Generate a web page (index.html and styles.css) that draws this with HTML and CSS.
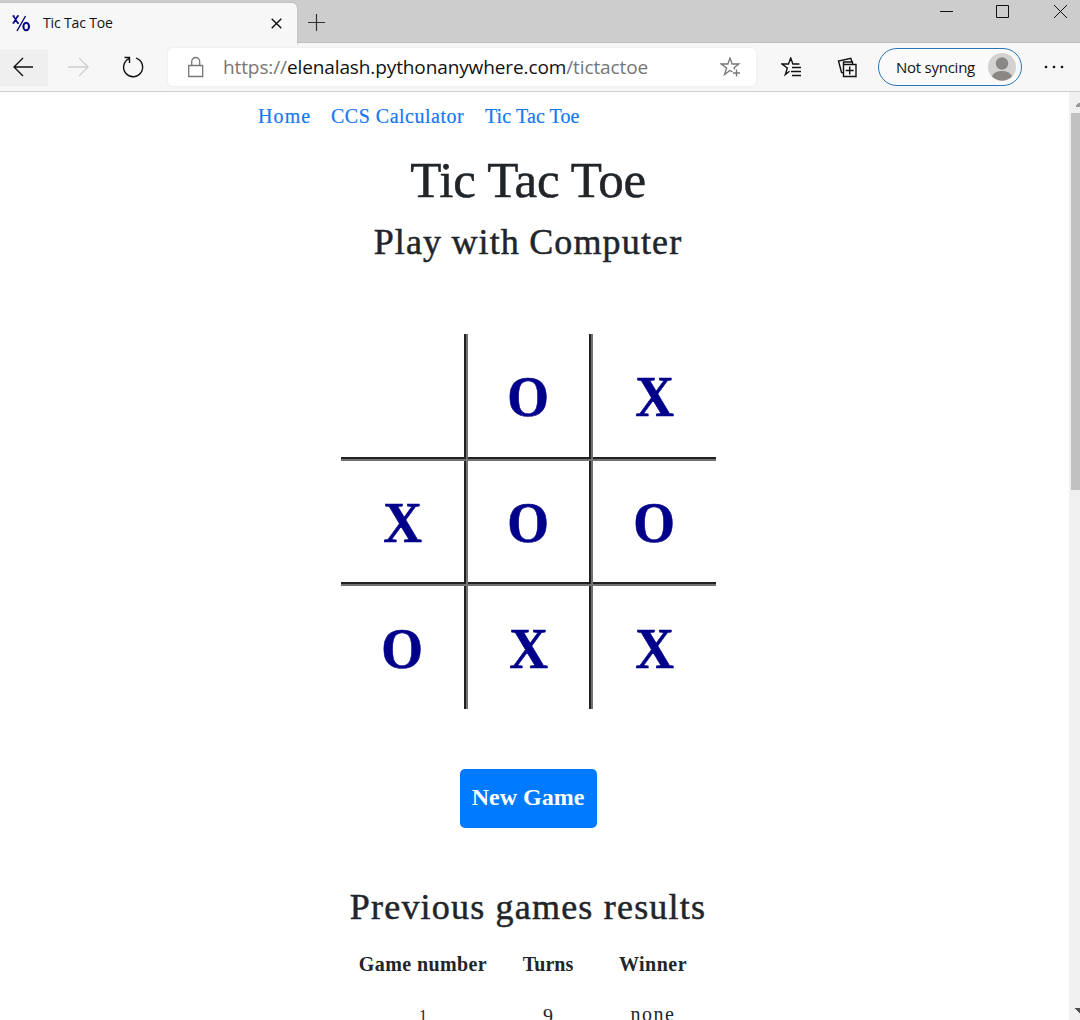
FILE: index.html
```html
<!DOCTYPE html>
<html lang="en">
<head>
<meta charset="utf-8">
<title>Tic Tac Toe</title>
<link rel="stylesheet" href="styles.css">
</head>
<body>
<div class="browser">
  <header class="tabs">
    <div class="tab">
      <svg class="favicon" width="19" height="18" viewBox="0 0 19 18"><path d="M1.5 2l4.2 7M5.7 2L1.5 9M0.5 2h2M5 2h1.8M0.5 9h1.8M4.8 9H7" stroke-width="1.5"/><path d="M13.5 2L5 17" stroke-width="1.4"/><ellipse cx="14.2" cy="12.5" rx="2.8" ry="3.8" stroke-width="2"/></svg>
      <span class="tab-title">Tic Tac Toe</span>
      <svg class="tab-close" width="11" height="11" viewBox="0 0 11 11"><path d="M.7.7l9.6 9.6M10.3.7L.7 10.3"/></svg>
    </div>
    <svg class="new-tab" width="17" height="17" viewBox="0 0 17 17"><path d="M8.500 0v17M0 8.500h17"/></svg>
    <svg class="window-buttons" width="130" height="16" viewBox="0 0 130 16"><path d="M0 7.500h13M56.500 1.500h12v12h-12zM114 1l13 13M127 1l-13 13"/></svg>
  </header>
  <div class="toolbar">
    <div class="back"><svg width="22" height="20" viewBox="0 0 22 20"><path d="M11 1L2 10l9 9M2 10h19"/></svg></div>
    <svg class="forward" width="22" height="20" viewBox="0 0 22 20"><path d="M11 1l9 9-9 9M20 10H0"/></svg>
    <svg class="reload" width="24" height="24" viewBox="0 0 24 24"><path d="M15 3.200A9.500 9.500 0 1 1 8 3.700M3.500 2.500h5v5.500"/></svg>
    <div class="address">
      <svg class="lock" width="18" height="22" viewBox="0 0 18 22"><path d="M1.700 9.500h14v11h-14zM4.700 9.500V5.500a4 4 0 0 1 8 0v4"/></svg>
      <div class="url">https://<b>elenalash.pythonanywhere.com</b>/tictactoe</div>
      <svg class="star" width="21" height="21" viewBox="0 0 21 21"><path d="M12.500 15L10 13.500l-5.500 4 2.100-6.600L1.200 7h6.600L10 1l2.200 6h6.600l-4.700 3.700.5 1.800M16.500 12.500v7M13 16h7"/></svg>
    </div>
    <svg class="favorites" width="21" height="21" viewBox="0 0 21 21"><path d="M8.500 14.200L4.300 17.500l2-6.600L1 7h6.500l2.200-6 2.200 6h6.500M11 10.500h9M10 14.500h10M11 18.500h9"/></svg>
    <svg class="collections" width="21" height="21" viewBox="0 0 21 21"><path d="M6.500 7.500h12.500v12h-12.500zM12.700 9.500v8M8.700 13.500h8M6.500 16l-2-.5L1.500 4l12.300-2.800 1.300 4M6.500 15V5h9v2.500"/></svg>
    <div class="profile">
      <span class="profile-text">Not syncing</span>
      <svg width="28" height="28" viewBox="0 0 28 28"><circle cx="14" cy="14" r="14" fill="#d4d2d0"/><circle cx="14" cy="10.500" r="6.200" fill="#8b8785"/><path d="M4 23.500c1.500-4 5.500-5.500 10-5.500s8.500 1.500 10 5.500C18 29 10 29 4 23.500z" fill="#8b8785"/></svg>
    </div>
    <svg class="more" width="20" height="4" viewBox="0 0 20 4"><circle cx="2" cy="2" r="1.300"/><circle cx="10" cy="2" r="1.300"/><circle cx="18" cy="2" r="1.300"/></svg>
  </div>
  <div class="viewport">
    <main class="container">
      <nav class="nav"><a class="home">Home</a><a class="calc">CCS Calculator</a><a class="ttt">Tic Tac Toe</a></nav>
      <h1 class="title">Tic Tac Toe</h1>
      <h2 class="subtitle">Play with Computer</h2>
      <div class="board">
        <div class="cell right bottom"></div><div class="cell right bottom"><span>O</span></div><div class="cell bottom"><span>X</span></div>
        <div class="cell right bottom"><span>X</span></div><div class="cell right bottom"><span>O</span></div><div class="cell bottom"><span>O</span></div>
        <div class="cell right"><span>O</span></div><div class="cell right"><span>X</span></div><div class="cell"><span>X</span></div>
      </div>
      <button class="new-game">New Game</button>
      <h2 class="results-title">Previous games results</h2>
      <div class="results">
        <div class="th number">Game number</div><div class="th turns">Turns</div><div class="th winner">Winner</div>
        <div class="td one">1</div><div class="td nine">9</div><div class="td none">none</div>
      </div>
    </main>
    <div class="scrollbar"><div class="arrow"></div><div class="thumb"></div><div class="arrow down"></div></div>
  </div>
</div>
</body>
</html>
```
FILE: styles.css
```css
* { box-sizing: border-box; }
body { margin: 0; background: #fff; color: #212529; font-family: "Liberation Serif", serif; }
svg { display: block; flex: none; fill: none; stroke: #111; stroke-width: 1.4; }
.browser { width: 1080px; height: 1020px; overflow: hidden; display: flex; flex-direction: column; }

.tabs { height: 43px; background: #cdcdcd; display: flex; align-items: flex-start; border-bottom: 1px solid #bebebe; flex: none; }
.tab { width: 297px; height: 43px; margin-top: 3px; padding: 0 15px 4px 12px; background: #f7f7f7; border-radius: 0 5px 0 0; display: flex; align-items: center; box-shadow: 0 0 2px #aaa; clip-path: inset(-3px -3px 0 0); }
.favicon { stroke: #00008b; }
.tab-title { margin-left: 12px; font: 14px "Open Sans", sans-serif; color: #111; letter-spacing: -.15px; }
.tab-close { margin-left: auto; margin-top: 2px; }
.new-tab { margin: 14px 0 0 11px; stroke: #333; stroke-width: 1.2; }
.window-buttons { margin: 4px 10px 0 auto; stroke-width: 1; }

.toolbar { height: 49px; background: #f7f7f7; border-bottom: 1px solid #cfcfcf; display: flex; align-items: center; flex: none; }
.back { width: 48px; height: 37px; background: #efefef; display: flex; align-items: center; padding-left: 12px; }
.forward { margin-left: 20px; stroke: #cfcfcf; }
.reload { margin-left: 31px; }
.address { width: 588px; height: 38px; margin-left: 23px; padding: 0 15px 0 19px; background: #fff; border-radius: 5px; box-shadow: 0 0 3px #e5e5e5; display: flex; align-items: center; }
.lock, .star { stroke: #777; stroke-width: 1.3; }
.url { margin-left: 18px; font: 19px "Open Sans", sans-serif; color: #767676; white-space: nowrap; letter-spacing: -.11px; }
.url b { font-weight: 400; color: #111; }
.star { margin-left: auto; }
.favorites { margin-left: 25px; }
.collections { margin-left: 35px; }
.profile { width: 144px; height: 38px; margin-left: 20px; padding: 0 5px 0 17px; border: 1.5px solid #2676b8; border-radius: 19px; background: #fafafa; display: flex; align-items: center; justify-content: space-between; }
.profile svg { stroke: none; }
.profile-text { font: 15px "Open Sans", sans-serif; color: #111; white-space: nowrap; letter-spacing: -.25px; }
.more { margin-left: 22px; fill: #111; stroke: none; }

.viewport { flex: 1; display: flex; min-height: 0; overflow: hidden; }
.container { width: 540px; margin: 0 271px 0 258px; flex: none; display: flex; flex-direction: column; align-items: center; }
.nav { align-self: stretch; flex: none; height: 48px; display: flex; align-items: center; color: #1577f2; font-size: 20px; white-space: nowrap; -webkit-text-stroke: .2px #1577f2; }
.home { width: 73px; letter-spacing: 1.1px; }
.calc { width: 154px; letter-spacing: .5px; }
.ttt { letter-spacing: .1px; }
h1, h2 { margin: 0; font-weight: 400; white-space: nowrap; flex: none; -webkit-text-stroke: .5px #212529; }
.title { height: 80px; line-height: 80px; font-size: 51px; letter-spacing: -.25px; }
.subtitle { height: 48px; line-height: 44px; font-size: 36px; letter-spacing: 1.15px; word-spacing: -1px; }
.board { margin-top: 66px; display: grid; grid-template: 127px 125px 123px / 127px 125px 123px; flex: none; }
.cell { display: flex; align-items: center; justify-content: center; padding-top: 3px; padding-left: 1px; color: #00008b; font-size: 57px; font-weight: 700; line-height: 60px; }
.cell span { transform: scaleX(.94); -webkit-text-stroke: .6px #00008b; }
.right { border-right: 2px solid #727272; padding-right: 2px; box-shadow: inset -2px 0 #222; }
.bottom { border-bottom: 2px solid #727272; padding-bottom: 2px; box-shadow: inset 0 -2px #222; }
.right.bottom { box-shadow: inset -2px -2px #222; }
.new-game { width: 137px; height: 59px; margin-top: 60px; padding: 0 0 3px; border: 0; border-radius: 5px; background: #007bff; color: #fff; font: bold 24px "Liberation Serif", serif; white-space: nowrap; flex: none; }
.results-title { margin-top: 54px; height: 52px; line-height: 50px; font-size: 36px; letter-spacing: 1.2px; }
.results { display: grid; grid-template-columns: 162px 88px 122px; grid-auto-rows: 50px; width: 372px; font-size: 20px; line-height: 50px; text-align: center; flex: none; margin-top: 5px; }
.th { font-weight: 700; }
.number { letter-spacing: .4px; }
.winner { letter-spacing: .5px; }
.one { font-size: 16px; line-height: 53px; }
.nine { line-height: 54px; }
.none { letter-spacing: 1.5px; }

.scrollbar { width: 11px; background: #f0f0f0; display: flex; flex-direction: column; padding-left: 2px; }
.arrow { height: 21px; flex: none; background: linear-gradient(135deg, transparent 50%, #999 50%) 4px 9px / 6px 6px no-repeat; }
.thumb { height: 377px; background: #c1c1c1; flex: none; }
.down { margin-top: auto; background: linear-gradient(45deg, transparent 50%, #505050 50%) 4px 9px / 6px 6px no-repeat; }
```
